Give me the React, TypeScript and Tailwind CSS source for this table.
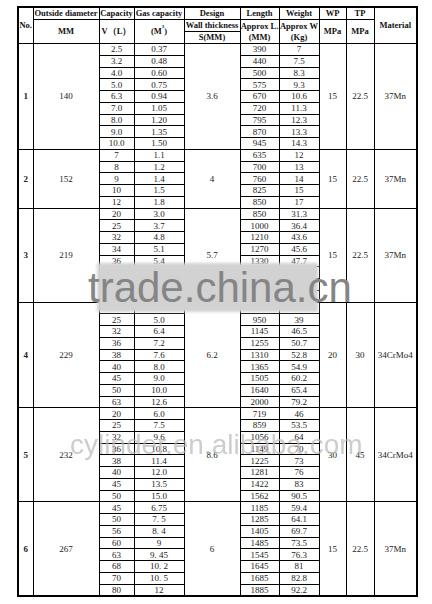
import React from 'react';

type Row = [string, string, string, string];
interface Group {
  no: string;
  od: string;
  wall: string;
  wp: string;
  tp: string;
  mat: string;
  rows: Row[];
}

const groups: Group[] = [
  {
    no: '1', od: '140', wall: '3.6', wp: '15', tp: '22.5', mat: '37Mn',
    rows: [
      ['2.5', '0.37', '390', '7'],
      ['3.2', '0.48', '440', '7.5'],
      ['4.0', '0.60', '500', '8.3'],
      ['5.0', '0.75', '575', '9.3'],
      ['6.3', '0.94', '670', '10.6'],
      ['7.0', '1.05', '720', '11.3'],
      ['8.0', '1.20', '795', '12.3'],
      ['9.0', '1.35', '870', '13.3'],
      ['10.0', '1.50', '945', '14.3'],
    ],
  },
  {
    no: '2', od: '152', wall: '4', wp: '15', tp: '22.5', mat: '37Mn',
    rows: [
      ['7', '1.1', '635', '12'],
      ['8', '1.2', '700', '13'],
      ['9', '1.4', '760', '14'],
      ['10', '1.5', '825', '15'],
      ['12', '1.8', '850', '17'],
    ],
  },
  {
    no: '3', od: '219', wall: '5.7', wp: '15', tp: '22.5', mat: '37Mn',
    rows: [
      ['20', '3.0', '850', '31.3'],
      ['25', '3.7', '1000', '36.4'],
      ['32', '4.8', '1210', '43.6'],
      ['34', '5.1', '1270', '45.6'],
      ['36', '5.4', '1330', '47.7'],
      ['', '', '', ''],
      ['', '', '', ''],
      ['', '', '', ''],
    ],
  },
  {
    no: '4', od: '229', wall: '6.2', wp: '20', tp: '30', mat: '34CrMo4',
    rows: [
      ['', '', '', ''],
      ['25', '5.0', '950', '39'],
      ['32', '6.4', '1145', '46.5'],
      ['36', '7.2', '1255', '50.7'],
      ['38', '7.6', '1310', '52.8'],
      ['40', '8.0', '1365', '54.9'],
      ['45', '9.0', '1505', '60.2'],
      ['50', '10.0', '1640', '65.4'],
      ['63', '12.6', '2000', '79.2'],
    ],
  },
  {
    no: '5', od: '232', wall: '8.6', wp: '30', tp: '45', mat: '34CrMo4',
    rows: [
      ['20', '6.0', '719', '46'],
      ['25', '7.5', '859', '53.5'],
      ['32', '9.6', '1056', '64'],
      ['36', '10.8', '1149', '70'],
      ['38', '11.4', '1225', '73'],
      ['40', '12.0', '1281', '76'],
      ['45', '13.5', '1422', '83'],
      ['50', '15.0', '1562', '90.5'],
    ],
  },
  {
    no: '6', od: '267', wall: '6', wp: '15', tp: '22.5', mat: '37Mn',
    rows: [
      ['45', '6.75', '1185', '59.4'],
      ['50', '7. 5', '1285', '64.1'],
      ['56', '8. 4', '1405', '69.7'],
      ['60', '9', '1485', '73.5'],
      ['63', '9. 45', '1545', '76.3'],
      ['68', '10. 2', '1645', '81'],
      ['70', '10. 5', '1685', '82.8'],
      ['80', '12', '1885', '92.2'],
    ],
  },
];

const th = 'border border-black p-0 text-center align-middle font-bold whitespace-nowrap text-[8.5px] leading-[11px] text-[#111]';
const td = 'border border-black p-0 text-center align-middle whitespace-nowrap text-[9px] leading-[10px] text-[#222]';

export default function App() {
  return (
    <div className="relative w-[432px] h-[604px] bg-white overflow-hidden" style={{ fontFamily: '"Liberation Serif", "Times New Roman", serif' }}>
      <div className="pt-[6px] pl-[17px]">
        <table className="table-fixed border-collapse border-2 border-black w-[399px]">
          <colgroup>
            <col className="w-[15px]" />
            <col className="w-[66px]" />
            <col className="w-[35px]" />
            <col className="w-[50px]" />
            <col className="w-[56px]" />
            <col className="w-[39px]" />
            <col className="w-[40px]" />
            <col className="w-[27px]" />
            <col className="w-[28px]" />
            <col className="w-[43px]" />
          </colgroup>
          <thead>
            <tr className="h-[12px]">
              <th rowSpan={3} className={th}>No.</th>
              <th className={th}>Outside diameter</th>
              <th className={th}>Capacity</th>
              <th className={th}>Gas capacity</th>
              <th className={th}>Design</th>
              <th className={th}>Length</th>
              <th className={th}>Weight</th>
              <th className={th}>WP</th>
              <th className={th}>TP</th>
              <th rowSpan={3} className={th}>Material</th>
            </tr>
            <tr className="h-[12px]">
              <th rowSpan={2} className={th}>MM</th>
              <th rowSpan={2} className={th}>V（L）</th>
              <th rowSpan={2} className={th}>
                (M<sup className="text-[5px] align-top leading-none">3</sup>)
              </th>
              <th className={th}>Wall thickness</th>
              <th rowSpan={2} className={th}>
                <div>Approx L.</div>
                <div>(MM)</div>
              </th>
              <th rowSpan={2} className={th}>
                <div>Approx W</div>
                <div>(Kg)</div>
              </th>
              <th rowSpan={2} className={th}>MPa</th>
              <th rowSpan={2} className={th}>MPa</th>
            </tr>
            <tr className="h-[12px]">
              <th className={th}>S(MM)</th>
            </tr>
          </thead>
          <tbody>
            {groups.map((g) =>
              g.rows.map((r, i) => (
                <tr key={g.no + '-' + i} className="h-[11.76px]">
                  {i === 0 && (
                    <>
                      <td rowSpan={g.rows.length} className={td + ' font-bold'}>{g.no}</td>
                      <td rowSpan={g.rows.length} className={td}>{g.od}</td>
                    </>
                  )}
                  <td className={td}>{r[0]}</td>
                  <td className={td}>{r[1]}</td>
                  {i === 0 && <td rowSpan={g.rows.length} className={td}>{g.wall}</td>}
                  <td className={td}>{r[2]}</td>
                  <td className={td}>{r[3]}</td>
                  {i === 0 && (
                    <>
                      <td rowSpan={g.rows.length} className={td}>{g.wp}</td>
                      <td rowSpan={g.rows.length} className={td}>{g.tp}</td>
                      <td rowSpan={g.rows.length} className={td}>{g.mat}</td>
                    </>
                  )}
                </tr>
              ))
            )}
          </tbody>
        </table>
      </div>

      {/* watermark band */}
      <div className="absolute left-[97px] top-[263px] w-[221px] h-[49px] bg-[#d2d2d2] blur-[1.5px]" />
      <div
        className="absolute left-[88px] top-[267px] text-[42px] leading-[42px] text-[#858585] whitespace-nowrap"
        style={{ fontFamily: '"Liberation Sans", Arial, sans-serif' }}
      >
        trade.china.cn
      </div>
      <div
        className="absolute left-[70px] top-[431px] text-[28px] leading-[28px] text-[#b8b8b8] opacity-70 whitespace-nowrap"
        style={{ fontFamily: '"Liberation Sans", Arial, sans-serif' }}
      >
        cylinder.en.alibaba.com
      </div>
    </div>
  );
}
